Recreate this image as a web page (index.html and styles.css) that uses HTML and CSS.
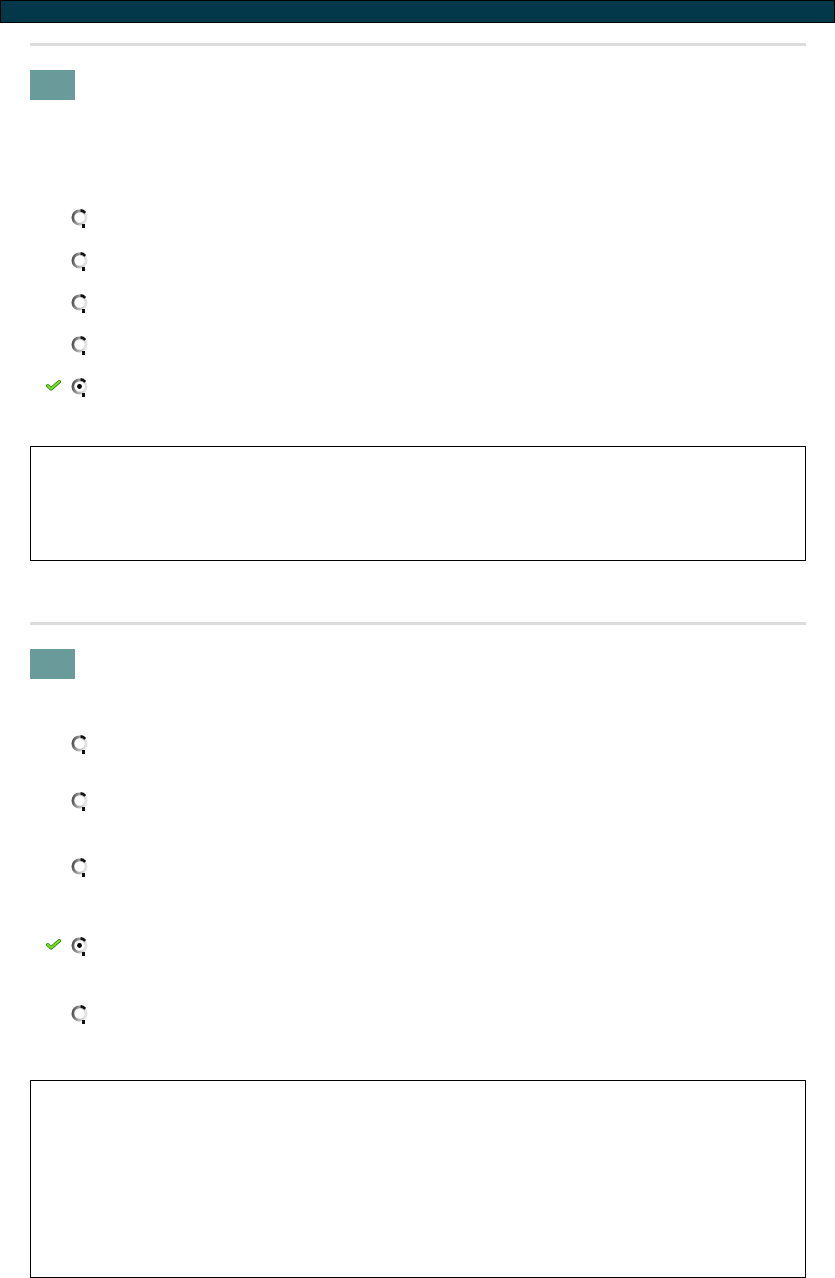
FILE: index.html
```html
<!DOCTYPE html>
<html lang="en">
<head>
<meta charset="utf-8">
<title>Quiz</title>
<link rel="stylesheet" href="styles.css">
</head>
<body>
<div class="topbar"></div>

<section class="question q1">
  <div class="rule"></div>
  <div class="qnum"></div>
  <div class="qtext"></div>
  <ul class="options">
    <li class="opt r43"><span class="mark"></span><svg class="radio" viewBox="0 0 18 20" width="18" height="20"><use href="#radio-off"/></svg></li>
    <li class="opt r42"><span class="mark"></span><svg class="radio" viewBox="0 0 18 20" width="18" height="20"><use href="#radio-off"/></svg></li>
    <li class="opt r42"><span class="mark"></span><svg class="radio" viewBox="0 0 18 20" width="18" height="20"><use href="#radio-off"/></svg></li>
    <li class="opt r42"><span class="mark"></span><svg class="radio" viewBox="0 0 18 20" width="18" height="20"><use href="#radio-off"/></svg></li>
    <li class="opt r42"><span class="mark"><svg viewBox="0 0 15 11" width="15" height="11"><use href="#check"/></svg></span><svg class="radio" viewBox="0 0 18 20" width="18" height="20"><use href="#radio-on"/></svg></li>
  </ul>
  <div class="feedback fb1"></div>
</section>

<section class="question q2">
  <div class="rule"></div>
  <div class="qnum"></div>
  <div class="qtext short"></div>
  <ul class="options">
    <li class="opt r57"><span class="mark"></span><svg class="radio" viewBox="0 0 18 20" width="18" height="20"><use href="#radio-off"/></svg></li>
    <li class="opt r66"><span class="mark"></span><svg class="radio" viewBox="0 0 18 20" width="18" height="20"><use href="#radio-off"/></svg></li>
    <li class="opt r79"><span class="mark"></span><svg class="radio" viewBox="0 0 18 20" width="18" height="20"><use href="#radio-off"/></svg></li>
    <li class="opt r68"><span class="mark"><svg viewBox="0 0 15 11" width="15" height="11"><use href="#check"/></svg></span><svg class="radio" viewBox="0 0 18 20" width="18" height="20"><use href="#radio-on"/></svg></li>
    <li class="opt r42"><span class="mark"></span><svg class="radio" viewBox="0 0 18 20" width="18" height="20"><use href="#radio-off"/></svg></li>
  </ul>
  <div class="feedback fb2"></div>
</section>

<svg class="defs" width="0" height="0" aria-hidden="true">
  <defs>
    <linearGradient id="ring" x1="0" y1="0" x2="1" y2="0.2">
      <stop offset="0" stop-color="#4a4a4a"/>
      <stop offset="0.45" stop-color="#9a9a9a"/>
      <stop offset="1" stop-color="#e2e2e2"/>
    </linearGradient>
    <g id="radio-base">
      <circle cx="8.5" cy="9.5" r="6.6" fill="#fff" stroke="url(#ring)" stroke-width="2.8"/>
      <path d="M9.5 2.4 A7 7 0 0 1 14.2 4.8" fill="none" stroke="#111" stroke-width="2.6"/>
      <rect x="11" y="16" width="3" height="4" fill="#111"/>
    </g>
    <g id="radio-off"><use href="#radio-base"/></g>
    <g id="radio-on"><use href="#radio-base"/><circle cx="8.5" cy="9.5" r="2.4" fill="#000"/></g>
    <g id="check">
      <path d="M1.8 5.8 L5 8.8 L13.2 1.8" fill="none" stroke="#2f8a10" stroke-width="3.6" stroke-linecap="round" stroke-linejoin="round"/>
      <path d="M1.8 5.8 L5 8.8 L13.2 1.8" fill="none" stroke="#7ddc2a" stroke-width="2" stroke-linecap="round" stroke-linejoin="round"/>
    </g>
  </defs>
</svg>
</body>
</html>
```
FILE: styles.css
```css
html, body {
  margin: 0;
  padding: 0;
  background: #ffffff;
  font-family: "Liberation Sans", Arial, sans-serif;
}

.topbar {
  height: 21px;
  background: #03374a;
  border: 1px solid #000;
}

.question {
  width: 776px;
  margin-left: 30px;
}

.rule {
  height: 3px;
  background: #dcdcdc;
}

.q1 .rule { margin-top: 20px; }
.q2 .rule { margin-top: 61px; }

.qnum {
  width: 45px;
  height: 30px;
  margin-top: 24px;
  background: #699b9b;
}

.qtext { height: 108px; }
.qtext.short { height: 55px; }

.options {
  list-style: none;
  margin: 0;
  padding: 0;
}

.opt {
  display: flex;
  align-items: flex-start;
  padding-left: 16px;
  box-sizing: border-box;
}

.mark {
  width: 15px;
  height: 20px;
  margin-right: 10px;
  display: flex;
  align-items: center;
}

.mark svg { display: block; margin-top: -4px; }

.radio { display: block; }

.r42 { height: 42px; }
.r43 { height: 43px; }
.r57 { height: 57px; }
.r66 { height: 66px; }
.r68 { height: 68px; }
.r79 { height: 79px; }

.feedback {
  border: 1px solid #000;
  box-sizing: border-box;
}

.fb1 { margin-top: 27px; height: 115px; }
.fb2 { margin-top: 34px; height: 198px; }

.defs { position: absolute; width: 0; height: 0; overflow: hidden; }
```
